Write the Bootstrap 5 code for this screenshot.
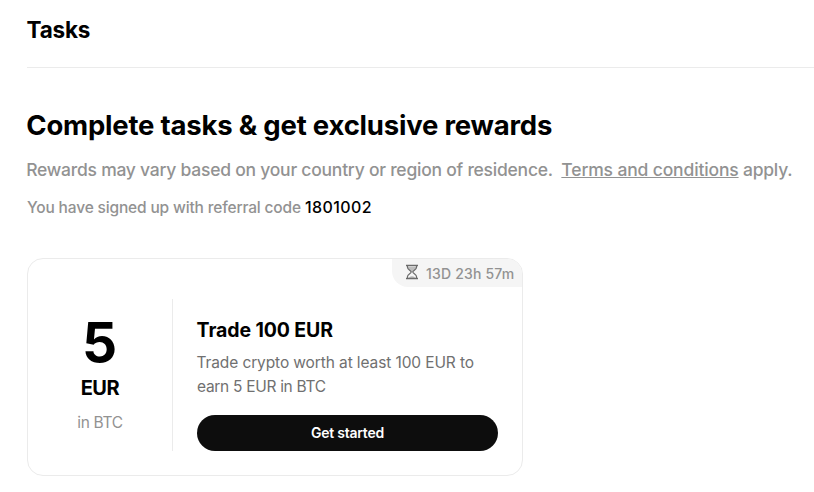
<!DOCTYPE html>
<html lang="en">
<head>
<meta charset="utf-8">
<meta name="viewport" content="width=device-width, initial-scale=1">
<title>Tasks</title>
<link href="https://cdn.jsdelivr.net/npm/bootstrap@5.3.0/dist/css/bootstrap.min.css" rel="stylesheet">
<style>
body{font-family:Inter,"Liberation Sans",sans-serif;color:#000;background:#fff;overflow:hidden}
.page{padding-left:27px}
.page-head{height:68px;padding-top:15px;border-bottom:1px solid #ebebeb}
.page-title{font-size:22.5px;line-height:30px;font-weight:700;letter-spacing:-.2px;text-indent:-.5px}
.headline{font-size:27.5px;line-height:36px;font-weight:700;letter-spacing:-.21px;margin-top:39px;text-indent:-.7px}
.note{font-size:17.5px;line-height:26px;font-weight:500;letter-spacing:-.24px;color:#929292;margin-top:14px;white-space:nowrap;text-indent:-.8px}
.terms{letter-spacing:-.15px;margin-left:8.5px}
.referral{font-size:15.5px;line-height:24px;height:24px;font-weight:500;letter-spacing:-.16px;color:#929292;margin-top:12px}
.code{font-size:16px;letter-spacing:.4px}
.task{width:496px;height:218px;border:1px solid #ebebeb;border-radius:16px;margin-top:39px}
.timer{width:130px;height:28px;background:#f5f5f5;border-radius:0 15px 0 16px;color:#929292;font-size:14px;font-weight:500;letter-spacing:.18px;padding-left:13px;gap:7px}
.timer svg{margin-top:-2px}
.reward{width:145px;height:152px;border-right:1px solid #ebebeb;padding-top:15px}
.amount{font-size:55px;line-height:56px;font-weight:700;text-indent:-1px}
.unit{font-size:20px;line-height:28px;font-weight:700;letter-spacing:-.4px;margin-top:4px}
.asset{font-size:15.5px;line-height:24px;color:#929292;letter-spacing:-.35px;margin-top:9px}
.details{padding:17px 24px 0}
.task-name{font-size:19.5px;line-height:28px;font-weight:700;letter-spacing:-.1px;text-indent:-.4px}
.task-text{font-size:15.5px;line-height:24px;letter-spacing:-.11px;color:#707070;margin-top:7px;white-space:nowrap;text-indent:-.5px}
.task-text .tail{letter-spacing:-.3px}
.start{height:36px;background:#0d0d0d;color:#fff;font-size:14px;line-height:20px;font-weight:600;letter-spacing:-.25px;margin-top:16px}
</style>
<script src="https://cdn.jsdelivr.net/npm/bootstrap@5.3.0/dist/js/bootstrap.bundle.min.js"></script>
</head>
<body>
<main class="page">
  <header class="page-head"><h1 class="page-title mb-0">Tasks</h1></header>
  <h2 class="headline mb-0">Complete tasks &amp; get exclusive rewards</h2>
  <p class="note mb-0">Rewards may vary based on your country or region of residence.<a href="#" class="terms text-reset">Terms and conditions</a> apply.</p>
  <p class="referral mb-0">You have signed up with referral code <span class="code text-black">1801002</span></p>
  <section class="task d-flex flex-column">
    <div class="timer d-flex align-items-center align-self-end">
      <svg width="14" height="16" viewBox="0 0 14 16" fill="none" stroke="#6b6b6b" stroke-width="1.2" aria-hidden="true">
        <path d="M3 3h8v1.500L8 8H6L3 4.500zM4 14c.5-2.500 5.500-2.500 6 0z" fill="#bdbdbd" stroke="none"/>
        <path d="M1 1.500h12M1 14.500h12" stroke-width="1.500"/>
        <path d="M2.500 1.500v2c0 2 3.700 3.200 3.700 4.500s-3.700 2.500-3.700 4.500v2M11.500 1.500v2c0 2-3.700 3.200-3.700 4.500s3.700 2.500 3.700 4.500v2"/>
      </svg>
      <span>13D 23h 57m</span>
    </div>
    <div class="d-flex mt-2 pt-1">
      <div class="reward text-center flex-shrink-0">
        <div class="amount">5</div>
        <div class="unit">EUR</div>
        <div class="asset">in BTC</div>
      </div>
      <div class="details flex-grow-1">
        <h3 class="task-name mb-0">Trade 100 EUR</h3>
        <p class="task-text mb-0">Trade crypto worth at least 100 EUR to<br><span class="tail">earn 5 EUR in BTC</span></p>
        <button type="button" class="start btn w-100 rounded-pill border-0 py-0">Get started</button>
      </div>
    </div>
  </section>
</main>
</body>
</html>
